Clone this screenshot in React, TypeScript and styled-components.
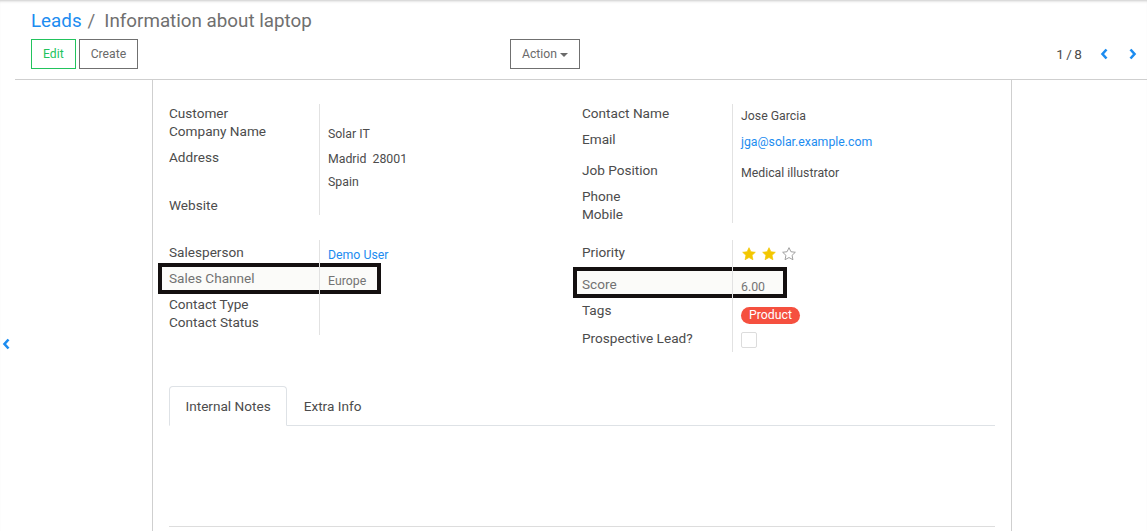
import styled, { createGlobalStyle } from "styled-components";

const GlobalStyle = createGlobalStyle`
  html, body {
    margin: 0;
    padding: 0;
    background: #fff;
  }
  body {
    font-family: Roboto, "Noto Sans", sans-serif;
    font-size: 13.6px;
    color: #4c4c4c;
  }
  * {
    box-sizing: border-box;
  }
`;

const Page = styled.div`
  min-height: 100vh;
  overflow: hidden;
  box-shadow: inset 0 3px 3px -2px rgba(0, 0, 0, 0.22);
`;

const ControlPanel = styled.div`
  margin-left: 15px;
  padding: 8px 1px 10px 16px;
  border-bottom: 1px solid #cfcfcf;
`;

const Breadcrumb = styled.div`
  font-size: 18.8px;
  line-height: 26px;
  color: #6f6f6f;
`;

const Crumb = styled.a`
  color: #1c8cf0;
  text-decoration: none;
`;

const Slash = styled.span`
  margin: 0 9px 0 6px;
  color: #777;
`;

const Bar = styled.div`
  display: grid;
  grid-template-columns: 549px 1fr;
  margin-top: 5px;
  height: 30px;
`;

const LeftBar = styled.div`
  display: flex;
  justify-content: space-between;
`;

const Buttons = styled.div`
  display: flex;
  gap: 3px;
`;

const Button = styled.button<{ $primary?: boolean }>`
  display: inline-flex;
  align-items: center;
  gap: 3px;
  height: 30px;
  padding: 0 11px;
  background: #fff;
  border: 1px solid ${(p) => (p.$primary ? "#22c35d" : "#707070")};
  color: ${(p) => (p.$primary ? "#22c35d" : "#6a6a6a")};
  font-family: Roboto, sans-serif;
  font-size: 12.2px;
  cursor: pointer;
`;

const Caret = styled.span`
  width: 0;
  height: 0;
  margin-top: 1px;
  border-left: 4px solid transparent;
  border-right: 4px solid transparent;
  border-top: 4px solid #6a6a6a;
`;

const Pager = styled.div`
  display: flex;
  align-items: center;
  justify-content: flex-end;
`;

const PagerValue = styled.span`
  font-size: 13.6px;
  margin-right: 8px;
  word-spacing: -1px;
`;

const ArrowButton = styled.button`
  width: 28px;
  height: 30px;
  padding: 0;
  display: flex;
  align-items: center;
  justify-content: center;
  background: none;
  border: 0;
  cursor: pointer;
`;

const Content = styled.div`
  display: flex;
`;

const Gutter = styled.div`
  width: 152px;
  flex: none;
  padding: 257px 0 0 2px;
`;

const Sheet = styled.div`
  width: 860px;
  flex: none;
  min-height: 460px;
  border-left: 1px solid #cfcfcf;
  border-right: 1px solid #cfcfcf;
  padding: 24px 16px 24px;
`;

const Groups = styled.div<{ $gap?: number }>`
  display: grid;
  grid-template-columns: 413px 413px;
  align-items: start;
  margin-top: ${(p) => p.$gap ?? 0}px;
`;

const Group = styled.div`
  display: flex;
  flex-direction: column;
`;

const Row = styled.div<{ $h: number }>`
  position: relative;
  display: grid;
  grid-template-columns: 151px 1fr;
  height: ${(p) => p.$h}px;
`;

const Mark = styled.div<{ $left: number; $width: number }>`
  position: absolute;
  top: 0;
  bottom: 0;
  left: ${(p) => p.$left}px;
  width: ${(p) => p.$width}px;
  border: 4px solid #141010;
  background: #fbfbf9;
`;

const Label = styled.div<{ $pad: number; $muted?: boolean }>`
  position: relative;
  padding-top: ${(p) => p.$pad}px;
  border-right: 1px solid #e2e2e2;
  font-size: 13.6px;
  line-height: 18px;
  color: ${(p) => (p.$muted ? "#727272" : "#4c4c4c")};
`;

const Value = styled.div<{ $pad: number; $muted?: boolean }>`
  position: relative;
  padding: ${(p) => p.$pad + 1}px 0 0 8px;
  font-size: 12.3px;
  line-height: 18px;
  color: ${(p) => (p.$muted ? "#747474" : "#4c4c4c")};
`;

const AddressLine = styled.div`
  & + & {
    margin-top: 5px;
  }
`;

const Link = styled.a`
  color: #1c8cf0;
  text-decoration: none;
`;

const Stars = styled.div`
  display: flex;
  gap: 4px;
`;

const Tag = styled.span`
  display: inline-block;
  height: 17px;
  padding: 0 8px;
  border-radius: 9px;
  background: #f5503f;
  color: #fff;
  font-size: 12.3px;
  line-height: 17px;
`;

const Checkbox = styled.div`
  width: 16px;
  height: 16px;
  border: 1px solid #dcdcdc;
  border-radius: 2px;
`;

const Tabs = styled.div`
  display: flex;
  margin-top: 34px;
  border-bottom: 1px solid #dee2e6;
`;

const Tab = styled.div<{ $active?: boolean }>`
  padding: 0 15.5px;
  line-height: 38px;
  margin-bottom: -1px;
  font-size: 13.6px;
  color: #4c4c4c;
  border: 1px solid transparent;
  border-radius: 4px 4px 0 0;
  ${(p) => p.$active && "border-color: #dee2e6 #dee2e6 #fff; background: #fff;"}
`;

const TabPane = styled.div`
  height: 101px;
  border-bottom: 1px solid #dddddd;
`;

function Chevron({ dir }: { dir: "left" | "right" }) {
  const d = dir === "left" ? "M6.5 1.5 L2.5 6 L6.5 10.5" : "M2.5 1.5 L6.5 6 L2.5 10.5";
  return (
    <svg width="9" height="12" viewBox="0 0 9 12">
      <path d={d} fill="none" stroke="#1c8cf0" strokeWidth="2.6" strokeLinejoin="miter" />
    </svg>
  );
}

function Star({ filled }: { filled: boolean }) {
  return (
    <svg width="16" height="16" viewBox="0 0 24 24">
      <path
        d="M12 2.5l2.9 6.1 6.6.8-4.9 4.6 1.3 6.6L12 17.3l-5.9 3.3 1.3-6.6-4.9-4.6 6.6-.8z"
        fill={filled ? "#f3c700" : "none"}
        stroke={filled ? "#f3c700" : "#9a9a9a"}
        strokeWidth={filled ? 1 : 1.4}
        strokeLinejoin="round"
      />
    </svg>
  );
}

export default function App() {
  return (
    <>
      <GlobalStyle />
      <Page>
        <ControlPanel>
          <Breadcrumb>
            <Crumb href="#">Leads</Crumb>
            <Slash>/</Slash>
            Information about laptop
          </Breadcrumb>
          <Bar>
            <LeftBar>
              <Buttons>
                <Button $primary>Edit</Button>
                <Button>Create</Button>
              </Buttons>
              <Button>
                Action <Caret />
              </Button>
            </LeftBar>
            <Pager>
              <PagerValue>1 / 8</PagerValue>
              <ArrowButton>
                <Chevron dir="left" />
              </ArrowButton>
              <ArrowButton>
                <Chevron dir="right" />
              </ArrowButton>
            </Pager>
          </Bar>
        </ControlPanel>

        <Content>
          <Gutter>
            <Chevron dir="left" />
          </Gutter>
          <Sheet>
            <Groups>
              <Group>
                <Row $h={18}>
                  <Label $pad={0}>Customer</Label>
                  <Value $pad={0} />
                </Row>
                <Row $h={20}>
                  <Label $pad={0}>Company Name</Label>
                  <Value $pad={2}>Solar IT</Value>
                </Row>
                <Row $h={50}>
                  <Label $pad={6}>Address</Label>
                  <Value $pad={7}>
                    <AddressLine>Madrid&nbsp; 28001</AddressLine>
                    <AddressLine>Spain</AddressLine>
                  </Value>
                </Row>
                <Row $h={23}>
                  <Label $pad={4}>Website</Label>
                  <Value $pad={4} />
                </Row>
              </Group>
              <Group>
                <Row $h={26}>
                  <Label $pad={0}>Contact Name</Label>
                  <Value $pad={2}>Jose Garcia</Value>
                </Row>
                <Row $h={31}>
                  <Label $pad={0}>Email</Label>
                  <Value $pad={2}>
                    <Link href="#">jga@solar.example.com</Link>
                  </Value>
                </Row>
                <Row $h={26}>
                  <Label $pad={0}>Job Position</Label>
                  <Value $pad={2}>Medical illustrator</Value>
                </Row>
                <Row $h={36}>
                  <Label $pad={0}>
                    Phone
                    <br />
                    Mobile
                  </Label>
                  <Value $pad={0} />
                </Row>
              </Group>
            </Groups>

            <Groups $gap={17}>
              <Group>
                <Row $h={23}>
                  <Label $pad={3}>Salesperson</Label>
                  <Value $pad={5}>
                    <Link href="#">Demo User</Link>
                  </Value>
                </Row>
                <Row $h={31}>
                  <Mark $left={-11} $width={223} />
                  <Label $pad={6} $muted>
                    Sales Channel
                  </Label>
                  <Value $pad={8} $muted>
                    Europe
                  </Value>
                </Row>
                <Row $h={41}>
                  <Label $pad={1}>
                    Contact Type
                    <br />
                    Contact Status
                  </Label>
                  <Value $pad={1} />
                </Row>
              </Group>
              <Group>
                <Row $h={27}>
                  <Label $pad={3}>Priority</Label>
                  <Value $pad={5}>
                    <Stars>
                      <Star filled />
                      <Star filled />
                      <Star filled={false} />
                    </Stars>
                  </Value>
                </Row>
                <Row $h={31}>
                  <Mark $left={-9} $width={214} />
                  <Label $pad={8} $muted>
                    Score
                  </Label>
                  <Value $pad={10} $muted>
                    6.00
                  </Value>
                </Row>
                <Row $h={26}>
                  <Label $pad={3}>Tags</Label>
                  <Value $pad={7}>
                    <Tag>Product</Tag>
                  </Value>
                </Row>
                <Row $h={28}>
                  <Label $pad={5}>Prospective Lead?</Label>
                  <Value $pad={7}>
                    <Checkbox />
                  </Value>
                </Row>
              </Group>
            </Groups>

            <Tabs>
              <Tab $active>Internal Notes</Tab>
              <Tab>Extra Info</Tab>
            </Tabs>
            <TabPane />
          </Sheet>
        </Content>
      </Page>
    </>
  );
}
